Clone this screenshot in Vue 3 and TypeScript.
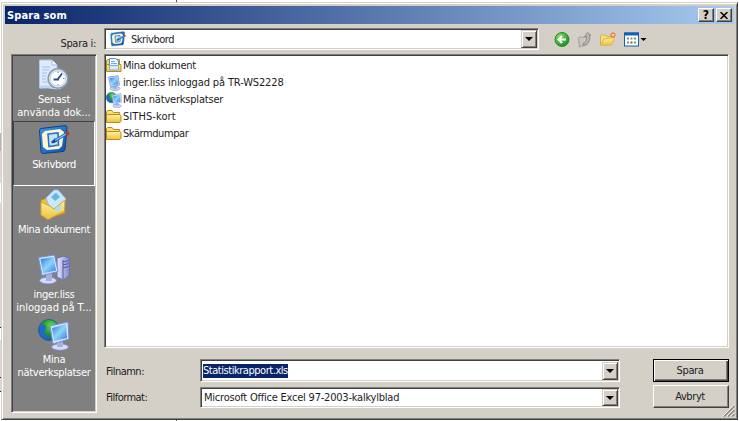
<script setup lang="ts">
interface Place { id: string; lines: { text: string; ls: number }[]; active?: boolean }
interface Entry { icon: string; name: string; ls: number }

const places: Place[] = [
  { id: 'recent', lines: [{ text: 'Senast', ls: -0.3 }, { text: 'använda dok...', ls: 0 }] },
  { id: 'desktop', lines: [{ text: 'Skrivbord', ls: -0.4 }], active: true },
  { id: 'docs', lines: [{ text: 'Mina dokument', ls: -0.35 }] },
  { id: 'computer', lines: [{ text: 'inger.liss', ls: -0.25 }, { text: 'inloggad på T...', ls: 0 }] },
  { id: 'network', lines: [{ text: 'Mina', ls: -0.3 }, { text: 'nätverksplatser', ls: -0.3 }] },
]
const entries: Entry[] = [
  { icon: 'docfolder', name: 'Mina dokument', ls: -0.3 },
  { icon: 'monitor', name: 'inger.liss inloggad på TR-WS2228', ls: -0.13 },
  { icon: 'network', name: 'Mina nätverksplatser', ls: -0.2 },
  { icon: 'folder', name: 'SITHS-kort', ls: 0.08 },
  { icon: 'folder', name: 'Skärmdumpar', ls: -0.43 },
]
</script>

<template>
  <div class="page">
    <svg class="defs" width="0" height="0">
      <defs>
        <linearGradient id="gBlue" x1="0" y1="0" x2="1" y2="1"><stop offset="0" stop-color="#2a78d8" /><stop offset=".5" stop-color="#8fd4fa" /><stop offset="1" stop-color="#2b7be0" /></linearGradient>
        <linearGradient id="gYellow" x1="0" y1="0" x2="0" y2="1"><stop offset="0" stop-color="#fff3a0" /><stop offset="1" stop-color="#edc03c" /></linearGradient>
        <linearGradient id="gDesk" x1="0" y1="0" x2="1" y2="1"><stop offset="0" stop-color="#3d9be6" /><stop offset="1" stop-color="#0f4fa8" /></linearGradient>
        <linearGradient id="gGrey" x1="0" y1="0" x2="1" y2="0"><stop offset="0" stop-color="#e2e4fa" /><stop offset="1" stop-color="#8288c8" /></linearGradient>
        <radialGradient id="gGreen" cx=".35" cy=".3" r=".75"><stop offset="0" stop-color="#86e070" /><stop offset="1" stop-color="#168a1c" /></radialGradient>
        <radialGradient id="gGlobe" cx=".6" cy=".3" r=".7"><stop offset="0" stop-color="#66dd52" /><stop offset=".55" stop-color="#21992f" /><stop offset="1" stop-color="#1a55b8" /></radialGradient>
      </defs>
      <symbol id="recent" viewBox="0 0 32 32">
        <path d="M1.500 1H14L19 6V29H1.500Z" fill="#dceafc" stroke="#a9c5ec" />
        <path d="M14 1V6H19" fill="#fff" stroke="#9dbbe4" />
        <path d="M4 8H12M4 11H11M4 14H9M4 17H8M4 20H8M4 23H10" stroke="#a5c1ee" />
        <path d="M2 28.500C9 25 15 31 23 28.500" stroke="#b9d4f8" stroke-width="2.500" fill="none" />
        <circle cx="20" cy="19.500" r="9.800" fill="#e6eef6" stroke="#8b9aac" stroke-width="1.600" />
        <circle cx="20" cy="19.500" r="7.600" fill="#fff" stroke="#c4d0df" />
        <path d="M20 20L24 14.500M15.500 20.500H21" stroke="#27507c" stroke-width="1.800" fill="none" />
        <path d="M20 12.500V14M26.500 19.500H25M20 26.500V25" stroke="#45a0c4" />
      </symbol>
      <symbol id="desktop" viewBox="0 0 32 32">
        <path d="M3 4.500L27 1.500Q29 1.500 29 4L27 25Q27 27 25 27.500L5 29.500Q3 29.500 3 27.500L1.500 7Q1.500 5 3 4.500Z" fill="url(#gDesk)" stroke="#0d3f8c" />
        <path d="M7 7L22 5L26 8L24 22L21 25L9 26L5 23L4 10Z" fill="#fff7d2" />
        <path d="M10 10L20 9L20.500 21L11 22.500Z" fill="#c3e5fb" stroke="#2776c6" stroke-width="1.600" />
        <path d="M14 18.500L28 10" stroke="#2563ac" stroke-width="3" /><path d="M13 19L17 14L19 18Z" fill="#164888" />
        <path d="M17 16.500L28 10" stroke="#85cdf6" stroke-width="1.300" />
        <circle cx="29.500" cy="9.500" r="2" fill="#b83634" />
      </symbol>
      <symbol id="docs" viewBox="0 0 32 32">
        <path d="M3 11L9 9L12 12L25 8L27 24L9 30L3 26Z" fill="#eebf43" stroke="#bd8b20" />
        <path d="M8 9L16 1L20 1L28 10L20 21L12 20Z" fill="#c8e9fc" stroke="#8fc0e2" />
        <path d="M13 8L18 3.500L22 8L17 12Z" fill="#69b5e9" />
        <path d="M3 13L12 17L16 20L27 11L26.500 22L10 30.500L3 26Z" fill="url(#gYellow)" stroke="#d3a134" />
        <path d="M17 19.500L23 15V20L17 24Z" fill="#a8ddf2" />
      </symbol>
      <symbol id="computer" viewBox="0 0 32 32">
        <path d="M19 4L26 2L31.500 4.500V22L25 26L19 23Z" fill="url(#gGrey)" stroke="#6670b4" />
        <path d="M25 8L30.500 6.500M25 11L30.500 9.500M25 14L30.500 12.500M25 6V25" stroke="#4f58a4" />
        <ellipse cx="10" cy="26.500" rx="8.500" ry="3.500" fill="#d6dcf6" stroke="#7f88c8" />
        <path d="M8 19H14V27H8Z" fill="#a7b0e2" />
        <path d="M.500 3.500L16.500 1L20 17.500L4 21.500Z" fill="#d7e5fc" stroke="#7290d4" />
        <path d="M2.500 5L15.500 3L18 16.500L5 19.500Z" fill="url(#gBlue)" />
      </symbol>
      <symbol id="monitor" viewBox="0 0 16 16">
        <ellipse cx="9" cy="13.500" rx="5" ry="1.900" fill="#d6dcf6" stroke="#8f98ce" stroke-width=".8" />
        <path d="M7 10H11V14H7Z" fill="#a7b0e2" />
        <path d="M2.500 2L12 .800L13.500 10L4.500 11.800Z" fill="#d7e5fc" stroke="#7290d4" stroke-width=".8" />
        <path d="M3.800 3L11.300 2L12.300 9.200L5.300 10.600Z" fill="url(#gBlue)" />
      </symbol>
      <symbol id="network" viewBox="0 0 32 32">
        <circle cx="11" cy="11" r="10.500" fill="url(#gGlobe)" stroke="#1767a4" />
        <path d="M3 6C8 5 9 8 7 12C5 15 8 17 11 20C3 20 0 13 3 6Z" fill="#2367cf" />
        <ellipse cx="22" cy="28" rx="8.500" ry="3.300" fill="#d6dcf6" stroke="#7f88c8" />
        <path d="M19 22H25V28H19Z" fill="#a7b0e2" />
        <path d="M12 7L30 3L31 20L15 25Z" fill="#d7e5fc" stroke="#7290d4" />
        <path d="M14 9L28 5L29 19L16 22Z" fill="url(#gBlue)" />
      </symbol>
      <symbol id="folder" viewBox="0 0 16 16">
        <path d="M.500 12.500V2.500L1.500 1.500H6L7.500 3.500H13.500V6" fill="#f9dc72" stroke="#b98d1c" />
        <path d="M.500 13.500V6.500L2 5.500H13.500L15 6.500V12.500L14 13.500Z" fill="url(#gYellow)" stroke="#b98d1c" />
      </symbol>
      <symbol id="docfolder" viewBox="0 0 16 16">
        <path d="M.500 12V2.500L2 1.500H13.500V12" fill="#f6d866" stroke="#b98d1c" />
        <path d="M3.500 .500H9.500L12.500 3V11H3.500Z" fill="#eef7ff" stroke="#5790cf" />
        <path d="M5 3.500H9M5 5.500H11" stroke="#76a9df" />
        <path d="M.500 13.500V6.500H3V8H12.500V6.500H15V13.500Z" fill="url(#gYellow)" stroke="#b98d1c" />
        <path d="M3.500 7.500H12.500V12H3.500Z" fill="#d5ebfb" stroke="#78aedc" />
      </symbol>
    </svg>

    <main class="dialog">
      <header class="title">
        <span class="caption">Spara som</span>
        <button class="tb help">?</button>
        <button class="tb"><svg width="8" height="7" viewBox="0 0 8 7"><path d="M.500 0L7.500 7M7.500 0L.500 7" stroke="#000" stroke-width="1.500" /></svg></button>
      </header>

      <div class="lookin">
        <label class="look-label">Spara i:</label>
        <div class="combo top">
          <svg class="small" width="16" height="16"><use href="#desktop" /></svg>
          <span class="value skriv">Skrivbord</span>
          <span class="arrow"><i /></span>
        </div>
        <div class="tools">
          <svg width="16" height="16" viewBox="0 0 16 16"><circle cx="8" cy="7.500" r="7" fill="url(#gGreen)" stroke="#269027" /><path d="M12 7.500H5M8 4L4.500 7.500L8 11" stroke="#fff" stroke-width="2" fill="none" /></svg>
          <svg width="16" height="16" viewBox="0 0 16 16"><path d="M1.500 6L4 4.500L5 5.500L10 4.500V12.500L2.500 15Z" fill="#c8c7c2" stroke="#9d9d99" /><path d="M6 11.500C9.500 10 10 7.500 9.500 4.500H7.500L10.500 .500L14 3.500H12.500C13.500 9 11 12.500 6 13.500Z" fill="#bcbbb7" stroke="#898987" /></svg>
          <svg width="16" height="16" viewBox="0 0 16 16"><path d="M.500 13V4L2 3H5L6.500 4.500H11.500V8" fill="#fae17e" stroke="#d8af43" /><path d="M1 13.500L3.500 7L14.500 5.500L11.500 13Z" fill="url(#gYellow)" stroke="#dcb44b" /><path d="M13 0V6M10 3H16M11 1L15 5M15 1L11 5" stroke="#ec692b" /><circle cx="13" cy="3" r="1.100" fill="#ffe28b" /></svg>
          <svg width="24" height="16" viewBox="0 0 24 16"><rect x="1.500" y="1" width="14" height="13" fill="#fff" stroke="#155fb5" /><path d="M1 2H16" stroke="#155fb5" stroke-width="3" /><path d="M4 5.500H6V7.500H4ZM11 5.500H13V7.500H11ZM4 9.500H6V11.500H4Z" fill="#6f8c9c" /><path d="M7.500 5.500H9.500V7.500H7.500ZM11 9.500H13V11.500H11Z" fill="#5fa65e" /><path d="M7.500 9.500H9.500V11.500H7.500Z" fill="#a9473b" /><path d="M17.500 6H23.500L20.500 9Z" fill="#000" /></svg>
        </div>
      </div>

      <div class="body">
        <nav class="places">
          <div v-for="p in places" :key="p.id" class="place" :class="{ active: p.active }">
            <svg width="32" height="32"><use :href="'#' + p.id" /></svg>
            <span v-for="l in p.lines" :key="l.text" class="pl" :style="{ letterSpacing: l.ls + 'px' }">{{ l.text }}</span>
          </div>
        </nav>
        <section class="right">
          <ul class="list">
            <li v-for="e in entries" :key="e.name"><svg width="16" height="16"><use :href="'#' + e.icon" /></svg><span :style="{ letterSpacing: e.ls + 'px' }">{{ e.name }}</span></li>
          </ul>
          <div class="form">
            <div class="fields">
              <label class="fn">Filnamn:</label>
              <div class="combo name"><span class="selected">Statistikrapport.xls</span><span class="arrow"><i /></span></div>
              <label class="ff">Filformat:</label>
              <div class="combo format"><span class="value fmt">Microsoft Office Excel 97-2003-kalkylblad</span><span class="arrow"><i /></span></div>
            </div>
            <div class="actions">
              <button class="btn default">Spara</button>
              <button class="btn">Avbryt</button>
            </div>
          </div>
        </section>
      </div>
      <svg class="grip" width="13" height="13" viewBox="0 0 13 13"><path d="M1 12L12 1M5 12L12 5M9 12L12 9" stroke="#fff" /><path d="M2 12.500L12.500 2M6 12.500L12.500 6M10 12.500L12.500 10" stroke="#858580" stroke-width="1.500" /></svg>
    </main>
  </div>
</template>

<style>
body { overflow: hidden; background: #fff; }
</style>
<style scoped>
* { box-sizing: border-box; }
.page {
  width: 739px; height: 421px; padding: 2px 1px 1px 1px;
  background:
    linear-gradient(#555, #555) 176px 0 / 1px 2px no-repeat,
    linear-gradient(#555, #555) 176px 420px / 1px 1px no-repeat,
    linear-gradient(#222, #222) 0 327px / 1px 1px no-repeat,
    linear-gradient(#222, #222) 0 377px / 1px 1px no-repeat,
    linear-gradient(#222, #222) 0 391px / 1px 1px no-repeat,
    linear-gradient(180deg, #fff 133px, #b8b5b0 133px, #b8b5b0 151px, #ddd9d5 151px, #ddd9d5 183px, #fff 183px, #fff 203px, #ddd9d5 203px, #ddd9d5 327px, #fff 327px, #fff 340px, #ddd9d5 340px, #ddd9d5 391px, #fff 391px) 0 0 / 1px 421px no-repeat,
    #fff;
  font: 11px/13px "DejaVu Sans Condensed", "DejaVu Sans", sans-serif; font-stretch: condensed; color: #1c1c22; white-space: nowrap;
}
.defs { position: absolute; }
.dialog { position: relative; width: 737px; height: 418px; padding: 3px 3px 0; background: #d4d0c8; border: 1px solid; border-color: #d4d0c8 #404040 #404040 #d4d0c8; box-shadow: inset 1px 1px #fff, inset -1px -1px #808080; }
.title { display: flex; align-items: center; height: 18px; width: 729px; padding: 0 2px; gap: 2px; background: linear-gradient(90deg, #0a246a, #a6caf0); }
.caption { flex: 1; color: #fff; font-weight: bold; font-size: 11px; letter-spacing: .1px; }
.tb { display: flex; align-items: center; justify-content: center; width: 16px; height: 14px; padding: 0; background: #d4d0c8; border: 1px solid; border-color: #fff #404040 #404040 #fff; box-shadow: inset -1px -1px #808080; font: bold 12px/12px "DejaVu Sans Condensed", sans-serif; color: #000; }
.lookin { display: flex; height: 30px; padding-top: 4px; }
.look-label { width: 99px; padding: 9px 8px 0 0; text-align: right; letter-spacing: -.3px; padding-left: 10px; }
.combo { display: flex; align-items: center; background: #fff; border: 1px solid; border-color: #808080 #fff #fff #808080; box-shadow: inset 1px 1px #404040, inset -1px -1px #d4d0c8; padding: 2px 1px 2px 2px; }
.combo.top { width: 435px; height: 22px; }
.small { margin-left: 3px; }
.value { margin-left: 5px; }
.skriv { letter-spacing: -.45px; }
.arrow { display: flex; align-items: center; justify-content: center; width: 16px; height: 18px; margin: -1px 0 -1px auto; background: #d4d0c8; border: 1px solid; border-color: #d4d0c8 #404040 #404040 #d4d0c8; box-shadow: inset 1px 1px #fff, inset -1px -1px #808080; }
.format .arrow { height: 17px; }
.arrow i { border: solid transparent; border-width: 4px 4px 0; border-top-color: #000; }
.tools { display: flex; gap: 7px; padding: 4px 0 0 15px; }
.body { display: flex; padding-left: 6px; gap: 7px; }
.places { width: 86px; height: 359px; padding: 1px 1px 0 1px; background: #808080; border: 1px solid; border-color: #808080 #fff #fff #808080; box-shadow: inset 1px 1px #404040, inset -1px -1px #d4d0c8; color: #fff; }
.place { display: flex; flex-direction: column; align-items: center; height: 65px; padding-top: 2px; border: 1px solid transparent; }
.place svg { flex: none; margin-bottom: 2px; }
.pl { line-height: 13px; }
.place.active { border-color: #404040 #fff #fff #404040; }
.right { width: 625px; }
.list { height: 294px; margin: 0; padding: 2px 1px 1px; list-style: none; background: #fff; border: 1px solid; border-color: #808080 #fff #fff #808080; box-shadow: inset 1px 1px #404040, inset -1px -1px #d4d0c8; }
.list li { display: flex; align-items: center; height: 17px; gap: 1px; }
.form { display: flex; justify-content: space-between; padding-top: 11px; }
.fields { display: grid; grid-template-columns: 94px 420px; row-gap: 5px; padding-left: 2px; }
.fn { padding-top: 6px; letter-spacing: -.5px; }
.ff { padding-top: 4px; letter-spacing: -.55px; }
.combo.name { height: 23px; }
.combo.format { height: 21px; }
.selected { background: #0a246a; color: #fff; line-height: 14px; letter-spacing: -.46px; }
.fmt { margin-left: 1px; letter-spacing: -.22px; }
.actions { display: flex; flex-direction: column; gap: 3px; }
.btn { width: 76px; height: 23px; padding: 0 2px 0 0; background: #d4d0c8; border: 1px solid; border-color: #fff #404040 #404040 #fff; box-shadow: inset -1px -1px #808080; font: inherit; color: inherit; letter-spacing: -.4px; }
.btn.default { border-color: #000; box-shadow: inset 1px 1px #fff, inset -1px -1px #404040, inset -2px -2px #808080; }
.grip { position: absolute; right: 2px; bottom: 2px; }
</style>
